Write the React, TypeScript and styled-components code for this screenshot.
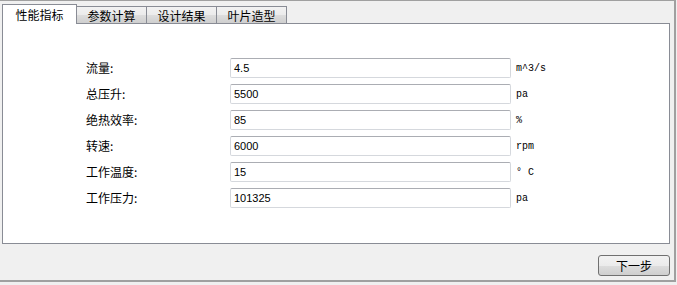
import React from 'react';
import styled, { createGlobalStyle } from 'styled-components';

const GlobalStyle = createGlobalStyle`
	html, body {
		margin: 0;
		padding: 0;
		background: #f0f0f0;
	}
	body {
		font-family: 'Noto Sans CJK SC', 'Liberation Sans', sans-serif;
		font-size: 12px;
		color: #000;
	}
`;

const Page = styled.div`
	width: 677px;
	height: 285px;
	background: #f0f0f0;
`;

const Frame = styled.div`
	box-sizing: border-box;
	width: 676px;
	height: 282px;
	border-top: 1px solid #a0a0a0;
	border-right: 2px solid #a0a0a0;
	border-bottom: 2px solid #a0a0a0;
	padding: 3px 4px 0 2px;
	display: flex;
	flex-direction: column;
`;

const TabBar = styled.div`
	display: flex;
	align-items: flex-end;
	height: 19px;
	position: relative;
	z-index: 1;
`;

const Tab = styled.div<{ $active?: boolean }>`
	box-sizing: border-box;
	display: flex;
	align-items: center;
	justify-content: center;
	border: 1px solid #898c95;
	border-bottom: none;
	font-family: 'Noto Sans CJK SC', sans-serif;
	font-size: 12px;
	line-height: 12px;
	color: #000;
	margin-left: ${(p) => (p.$active ? '0' : '-1px')};
	width: ${(p) => (p.$active ? '75px' : '71px')};
	height: ${(p) => (p.$active ? '20px' : '17px')};
	margin-bottom: ${(p) => (p.$active ? '-1px' : '0')};
	padding-top: ${(p) => (p.$active ? '0' : '2px')};
	background: ${(p) =>
		p.$active ? '#ffffff' : 'linear-gradient(to bottom, #f2f2f2 0%, #ebebeb 50%, #dddddd 51%, #cfcfcf 100%)'};
	&:first-child {
		margin-left: 0;
	}
`;

const Panel = styled.div`
	box-sizing: border-box;
	height: 221px;
	background: #fff;
	border: 1px solid #898c95;
	padding: 34px 0 0 83px;
`;

const Form = styled.div`
	display: grid;
	grid-template-columns: 139px 281px auto;
	grid-auto-rows: 20px;
	column-gap: 5px;
	row-gap: 6px;
	align-items: center;
`;

const Label = styled.span`
	font-family: 'Noto Sans CJK SC', sans-serif;
	font-size: 12px;
	line-height: 14px;
`;

const Field = styled.div`
	box-sizing: border-box;
	height: 20px;
	display: flex;
	align-items: center;
	padding: 0 3px;
	border: 1px solid #d5d8dd;
	border-top-color: #abadb3;
	border-radius: 2px;
	background: #fff;
	font-family: 'Liberation Sans', sans-serif;
	font-size: 11px;
`;

const Unit = styled.span`
	font-family: 'Liberation Mono', monospace;
	font-size: 10px;
`;

const ButtonRow = styled.div`
	display: flex;
	justify-content: flex-end;
	padding: 11px 0 0 0;
`;

const Button = styled.button`
	box-sizing: border-box;
	width: 72px;
	height: 21px;
	padding: 0;
	border: 1px solid #707070;
	border-radius: 3px;
	background: linear-gradient(to bottom, #f2f2f2 0%, #ebebeb 50%, #dddddd 51%, #cfcfcf 100%);
	font-family: 'Noto Sans CJK SC', sans-serif;
	font-size: 12px;
	color: #000;
`;

const tabs = ['性能指标', '参数计算', '设计结果', '叶片造型'];

const rows = [
	{ label: '流量:', value: '4.5', unit: 'm^3/s' },
	{ label: '总压升:', value: '5500', unit: 'pa' },
	{ label: '绝热效率:', value: '85', unit: '%' },
	{ label: '转速:', value: '6000', unit: 'rpm' },
	{ label: '工作温度:', value: '15', unit: '° C' },
	{ label: '工作压力:', value: '101325', unit: 'pa' },
];

const App = () => {
	return (
		<Page>
			<GlobalStyle />
			<Frame>
				<TabBar>
					{tabs.map((t, i) => (
						<Tab key={t} $active={i === 0}>
							{t}
						</Tab>
					))}
				</TabBar>
				<Panel>
					<Form>
						{rows.map((r) => (
							<React.Fragment key={r.label}>
								<Label>{r.label}</Label>
								<Field>{r.value}</Field>
								<Unit>{r.unit}</Unit>
							</React.Fragment>
						))}
					</Form>
				</Panel>
				<ButtonRow>
					<Button>下一步</Button>
				</ButtonRow>
			</Frame>
		</Page>
	);
};

export default App;
